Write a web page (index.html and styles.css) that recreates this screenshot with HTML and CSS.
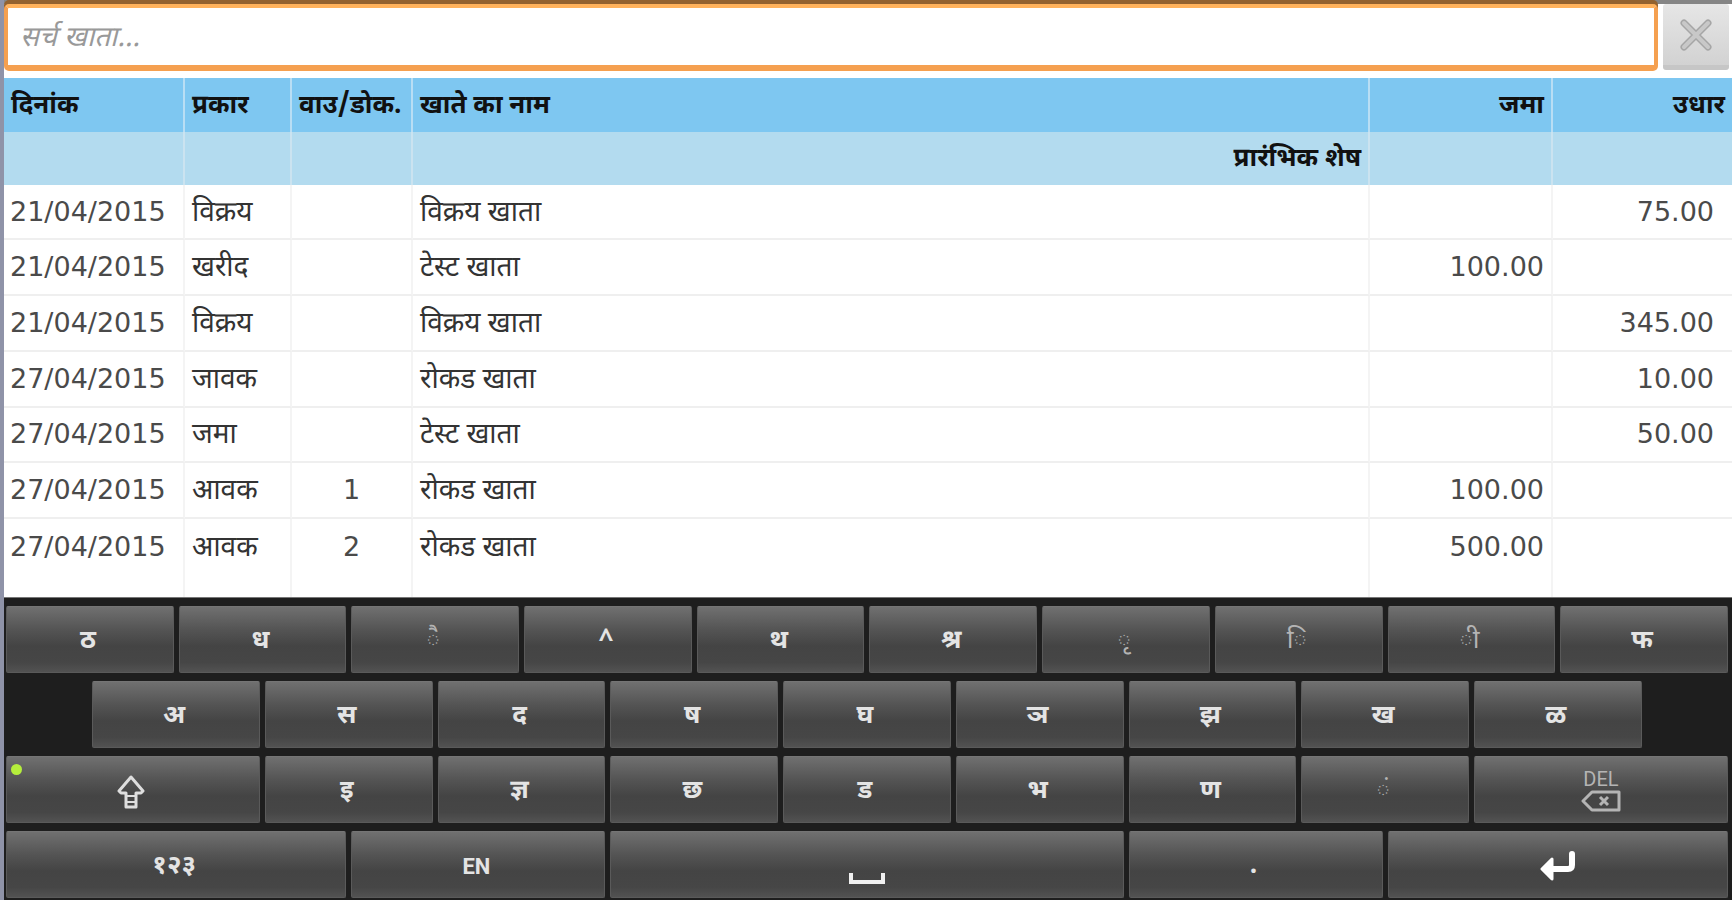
FILE: index.html
```html
<!DOCTYPE html>
<html lang="hi">
<head>
  <meta charset="UTF-8">
  <meta name="viewport" content="width=device-width, initial-scale=1.0">
  <title>खाता</title>
  <link rel="stylesheet" href="styles.css">
</head>
<body>
  <div class="screen">
    <form class="search-bar">
      <input type="text" class="search-input" placeholder="सर्च खाता..." aria-label="सर्च खाता">
      <button type="reset" class="clear-btn" aria-label="Clear">
        <svg viewBox="0 0 36 36" width="36" height="36">
          <path d="M6 6L30 30M30 6L6 30" stroke="#a6a6a6" stroke-width="7" stroke-linecap="round"/>
          <path d="M6 6L30 30M30 6L6 30" stroke="#c8c8c8" stroke-width="4" stroke-linecap="round"/>
        </svg>
      </button>
    </form>

    <table class="ledger">
      <colgroup>
        <col class="col-date">
        <col class="col-type">
        <col class="col-doc">
        <col>
        <col class="col-credit">
        <col class="col-debit">
      </colgroup>
      <thead>
        <tr>
          <th>दिनांक</th>
          <th>प्रकार</th>
          <th>वाउ/डोक.</th>
          <th>खाते का नाम</th>
          <th class="num">जमा</th>
          <th class="num">उधार</th>
        </tr>
      </thead>
      <tbody>
        <tr class="opening">
          <td></td>
          <td></td>
          <td></td>
          <td class="num">प्रारंभिक शेष</td>
          <td></td>
          <td></td>
        </tr>
        <tr>
          <td class="figure date">21/04/2015</td>
          <td>विक्रय</td>
          <td class="doc"></td>
          <td>विक्रय खाता</td>
          <td class="figure credit"></td>
          <td class="figure debit">75.00</td>
        </tr>
        <tr>
          <td class="figure date">21/04/2015</td>
          <td>खरीद</td>
          <td class="doc"></td>
          <td>टेस्ट खाता</td>
          <td class="figure credit">100.00</td>
          <td class="figure debit"></td>
        </tr>
        <tr>
          <td class="figure date">21/04/2015</td>
          <td>विक्रय</td>
          <td class="doc"></td>
          <td>विक्रय खाता</td>
          <td class="figure credit"></td>
          <td class="figure debit">345.00</td>
        </tr>
        <tr>
          <td class="figure date">27/04/2015</td>
          <td>जावक</td>
          <td class="doc"></td>
          <td>रोकड खाता</td>
          <td class="figure credit"></td>
          <td class="figure debit">10.00</td>
        </tr>
        <tr>
          <td class="figure date">27/04/2015</td>
          <td>जमा</td>
          <td class="doc"></td>
          <td>टेस्ट खाता</td>
          <td class="figure credit"></td>
          <td class="figure debit">50.00</td>
        </tr>
        <tr>
          <td class="figure date">27/04/2015</td>
          <td>आवक</td>
          <td class="figure doc">1</td>
          <td>रोकड खाता</td>
          <td class="figure credit">100.00</td>
          <td class="figure debit"></td>
        </tr>
        <tr class="last">
          <td class="figure date">27/04/2015</td>
          <td>आवक</td>
          <td class="figure doc">2</td>
          <td>रोकड खाता</td>
          <td class="figure credit">500.00</td>
          <td class="figure debit"></td>
        </tr>
        <tr class="filler">
          <td></td>
          <td></td>
          <td></td>
          <td></td>
          <td></td>
          <td></td>
        </tr>
      </tbody>
    </table>

    <div class="keyboard">
      <button class="key">ठ</button>
      <button class="key">ध</button>
      <button class="key sign">&#x25CC;ै</button>
      <button class="key">^</button>
      <button class="key">थ</button>
      <button class="key">श्र</button>
      <button class="key sign">&#x25CC;ृ</button>
      <button class="key sign">&#x25CC;ि</button>
      <button class="key sign">&#x25CC;ी</button>
      <button class="key">फ</button>

      <button class="key indent">अ</button>
      <button class="key">स</button>
      <button class="key">द</button>
      <button class="key">ष</button>
      <button class="key">घ</button>
      <button class="key">ञ</button>
      <button class="key">झ</button>
      <button class="key">ख</button>
      <button class="key">ळ</button>

      <button class="key wide shift" aria-label="Shift">
        <svg viewBox="0 0 28 34" width="28" height="34">
          <path d="M14 2L26 16L24 18H19V32H9V18H4L2 16Z" fill="none" stroke="#dedede" stroke-width="3" stroke-linejoin="round"/>
          <path d="M9 21H19M9 27H19" stroke="#dedede" stroke-width="2"/>
        </svg>
      </button>
      <button class="key">इ</button>
      <button class="key">ज्ञ</button>
      <button class="key">छ</button>
      <button class="key">ड</button>
      <button class="key">भ</button>
      <button class="key">ण</button>
      <button class="key sign">&#x25CC;ं</button>
      <button class="key wide del">
        <span>DEL</span>
        <svg viewBox="0 0 40 22" width="40" height="22">
          <path d="M11 2H38V20H11L2 11Z" fill="none" stroke="#b4b4b4" stroke-width="3" stroke-linejoin="round"/>
          <path d="M19 7L27 15M27 7L19 15" stroke="#b4b4b4" stroke-width="3"/>
        </svg>
      </button>

      <button class="key double">१२३</button>
      <button class="key wide lang">EN</button>
      <button class="key space" aria-label="Space">
        <svg viewBox="0 0 36 12" width="36" height="12">
          <path d="M2 0V9H34V0" fill="none" stroke="#f0f0f0" stroke-width="4"/>
        </svg>
      </button>
      <button class="key wide">.</button>
      <button class="key double enter" aria-label="Enter">
        <svg viewBox="0 0 36 30" width="36" height="30">
          <path d="M32 3V14Q32 18 28 18H10" fill="none" stroke="#fff" stroke-width="6" stroke-linecap="round"/>
          <path d="M2 18L12 8V28Z" fill="#fff" stroke="#fff" stroke-width="3" stroke-linejoin="round"/>
        </svg>
      </button>
    </div>
  </div>
</body>
</html>
```
FILE: styles.css
```css
* {
    margin: 0;
    padding: 0;
    box-sizing: border-box;
}

body {
    font-family: 'Noto Sans Devanagari', 'DejaVu Sans', sans-serif;
    background: #fff;
    color: #333;
}

.screen {
    min-height: 100vh;
    display: flex;
    flex-direction: column;
    border-left: 4px solid #8f93a8;
}

.search-bar {
    display: flex;
    align-items: flex-start;
    gap: 5px;
    padding-right: 3px;
    margin-bottom: 7px;
    border-top: 4px solid #858585;
}

.search-input {
    flex: 1;
    min-width: 0;
    height: 67px;
    padding: 4px 12px 0;
    border: 4px solid #f5a050;
    border-top-color: #ffb25c;
    border-bottom-width: 6px;
    border-radius: 5px;
    outline: none;
    font-family: inherit;
    font-size: 28px;
    box-shadow: 0 -4px 0 #93622f;
}

.search-input::placeholder {
    color: #999;
    font-style: italic;
    opacity: 1;
}

.clear-btn {
    width: 66px;
    height: 66px;
    display: flex;
    align-items: center;
    justify-content: center;
    border: none;
    border-bottom: 5px solid #c6c6c6;
    border-radius: 3px;
    background: linear-gradient(#e6e6e6, #d2d2d2);
    cursor: pointer;
}

.ledger {
    flex: 1;
    width: 100%;
    table-layout: fixed;
    border-collapse: separate;
    border-spacing: 0;
    font-size: 28px;
    line-height: 30px;
}

.col-date {
    width: 181px;
}

.col-type {
    width: 107px;
}

.col-doc {
    width: 121px;
}

.col-credit {
    width: 183px;
}

.col-debit {
    width: 179px;
}

.ledger th,
.ledger td {
    padding: 4px 7px 0;
    text-align: left;
    white-space: nowrap;
    border-right: 2px solid #f4f4f4;
}

.ledger td {
    height: 55px;
    border-bottom: 2px solid #efefef;
}

.ledger th {
    height: 54px;
    background: #7ec7f1;
    color: #111;
    font-size: 26px;
    border-right-color: #b9def4;
}

.ledger .opening td {
    height: 52px;
    background: #b3dbef;
    color: #111;
    font-size: 26px;
    font-weight: bold;
    border-right-color: #cbe3f0;
    border-bottom: none;
}

.ledger th:last-child,
.ledger td:last-child {
    border-right: none;
}

.ledger .num,
.ledger .credit,
.ledger .debit {
    text-align: right;
}

.ledger .debit {
    padding-right: 18px;
}

.ledger .doc {
    text-align: center;
}

.ledger .figure {
    padding-top: 0;
    font-family: 'DejaVu Sans', sans-serif;
    font-size: 27px;
    color: #4a4a4a;
}

.ledger .date {
    padding-left: 6px;
}

.ledger .last td {
    border-bottom: none;
}

.ledger .filler td {
    height: 22px;
    border-bottom: none;
}

.keyboard {
    display: grid;
    grid-template-columns: repeat(20, 1fr);
    gap: 8px 5px;
    padding: 8px 4px 2px 2px;
    border-top: 1px solid #777;
    background: #1e1e1e;
}

.key {
    grid-column: span 2;
    height: 67px;
    padding: 4px 4px 0 0;
    display: flex;
    align-items: center;
    justify-content: center;
    border: 1px solid #5a5a5a;
    border-top-color: #757575;
    border-radius: 2px;
    background: linear-gradient(#707070, #545454 35%, #444 60%, #464646 85%, #525252);
    color: #e4e4e4;
    font-family: inherit;
    font-size: 26px;
    font-weight: bold;
    line-height: 30px;
    cursor: pointer;
}

.key.sign {
    color: #b4b4b4;
    font-weight: normal;
}

.key.indent {
    grid-column: 2 / span 2;
}

.key.wide {
    grid-column: span 3;
}

.key.double {
    grid-column: span 4;
}

.key.space {
    grid-column: span 6;
    align-items: flex-end;
    padding: 0 0 12px;
}

.key.enter {
    padding: 2px 0 0;
}

.key.lang {
    font-family: Roboto, sans-serif;
    font-size: 22px;
}

.key.shift {
    position: relative;
}

/* caps indicator */
.key.shift::before {
    content: '';
    position: absolute;
    top: 7px;
    left: 4px;
    width: 11px;
    height: 11px;
    border-radius: 50%;
    background: #b5ee3c;
}

.key.del {
    flex-direction: column;
    padding: 0;
    color: #b4b4b4;
    font-family: Roboto, sans-serif;
    font-size: 20px;
    font-weight: normal;
    line-height: 22px;
}
```
